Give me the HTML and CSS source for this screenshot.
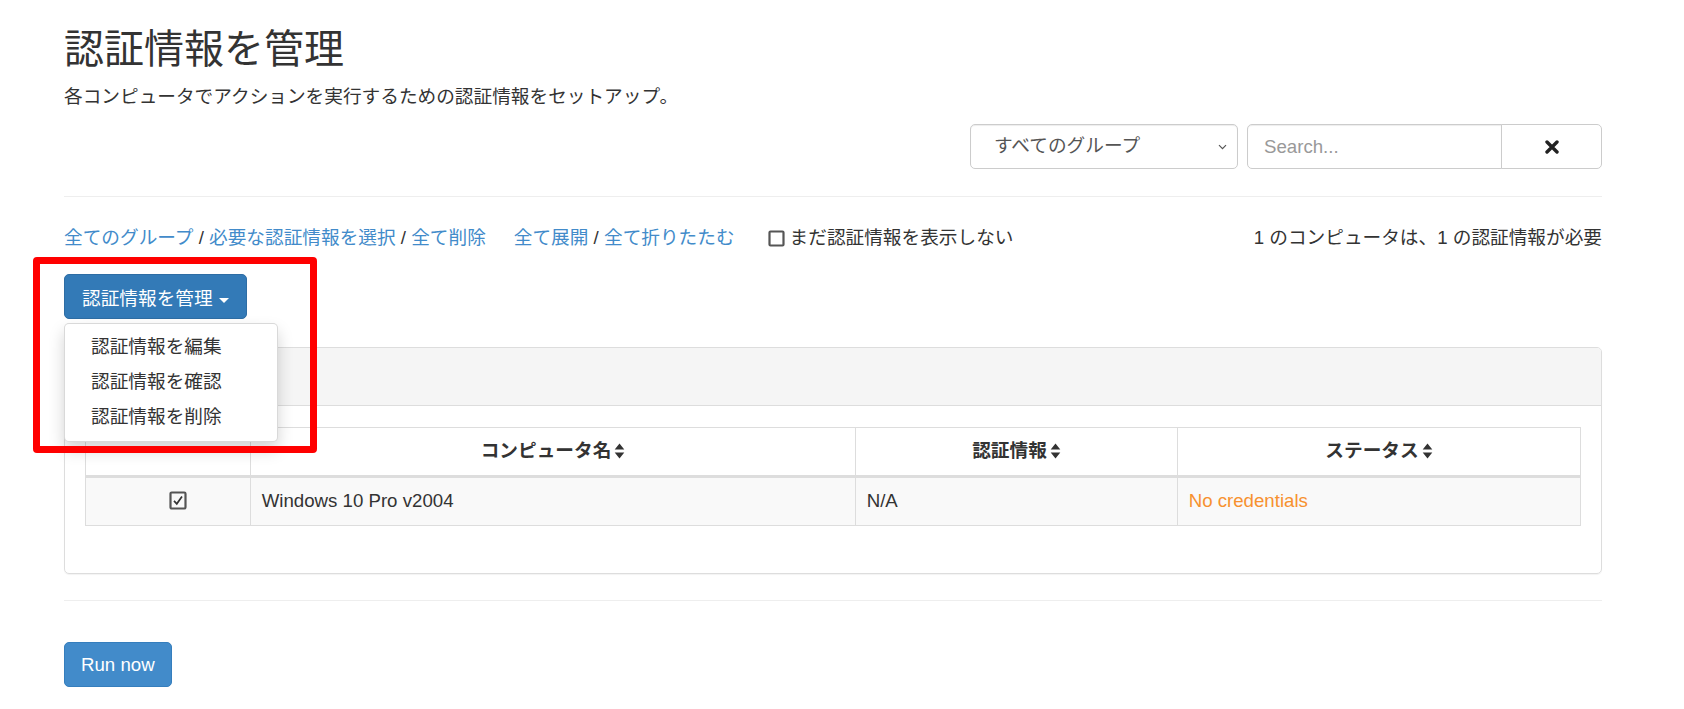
FILE: index.html
```html
<!DOCTYPE html>
<html lang="ja">
<head>
  <meta charset="UTF-8">
  <meta name="viewport" content="width=device-width, initial-scale=1.0">
  <title>認証情報を管理</title>
  <link rel="stylesheet" href="styles.css">
</head>
<body>
  <div class="container">
    <h2 class="page-title">認証情報を管理</h2>
    <p class="page-desc">各コンピュータでアクションを実行するための認証情報をセットアップ。</p>

    <div class="filter-row">
      <div class="select-box">
        <span>すべてのグループ</span>
        <svg class="chevron" width="9" height="6" viewBox="0 0 9 6"><path d="M1 1.2 L4.5 4.7 L8 1.2" fill="none" stroke="#555" stroke-width="1.2"/></svg>
      </div>
      <div class="search-group">
        <input class="search-input" type="text" placeholder="Search...">
        <button class="clear-btn" type="button">
          <svg width="14" height="14" viewBox="0 0 14 14"><path d="M2 2 L12 12 M12 2 L2 12" stroke="#222" stroke-width="3.4" stroke-linecap="round"/></svg>
        </button>
      </div>
    </div>

    <hr>

    <div class="toolbar">
      <div class="toolbar-left">
        <span class="link-group"><a href="#">全てのグループ</a> / <a href="#">必要な認証情報を選択</a> / <a href="#">全て削除</a></span>
        <span class="link-group"><a href="#">全て展開</a> / <a href="#">全て折りたたむ</a></span>
        <label class="hide-check">
          <svg width="17" height="17" viewBox="0 0 17 17"><rect x="1.5" y="1.5" width="14" height="14" rx="1" fill="none" stroke="#555" stroke-width="2.2"/></svg>
          まだ認証情報を表示しない
        </label>
      </div>
      <div class="toolbar-right">1 のコンピュータは、1 の認証情報が必要</div>
    </div>

    <div class="actions">
      <button class="btn btn-manage" type="button">認証情報を管理 <span class="caret"></span></button>
      <ul class="dropdown-menu">
        <li><a href="#">認証情報を編集</a></li>
        <li><a href="#">認証情報を確認</a></li>
        <li><a href="#">認証情報を削除</a></li>
      </ul>
      <div class="highlight"></div>
    </div>

    <div class="panel">
      <div class="panel-heading"></div>
      <div class="panel-body">
        <table class="cred-table">
          <thead>
            <tr>
              <th class="col-check"></th>
              <th class="col-name">コンピュータ名<svg class="sort" width="11" height="18" viewBox="0 0 11 18"><path d="M5.5 1.5 L10.3 7.6 H0.7 Z M0.7 10.4 H10.3 L5.5 16.5 Z" fill="#333"/></svg></th>
              <th class="col-cred">認証情報<svg class="sort" width="11" height="18" viewBox="0 0 11 18"><path d="M5.5 1.5 L10.3 7.6 H0.7 Z M0.7 10.4 H10.3 L5.5 16.5 Z" fill="#333"/></svg></th>
              <th class="col-status">ステータス<svg class="sort" width="11" height="18" viewBox="0 0 11 18"><path d="M5.5 1.5 L10.3 7.6 H0.7 Z M0.7 10.4 H10.3 L5.5 16.5 Z" fill="#333"/></svg></th>
            </tr>
          </thead>
          <tbody>
            <tr>
              <td class="cell-check">
                <svg width="18" height="19" viewBox="0 0 18 19"><rect x="1.5" y="1.5" width="15" height="16" rx="1.2" fill="none" stroke="#555" stroke-width="2.2"/><path d="M5 9.8 L7.8 12.8 L13 5.5" fill="none" stroke="#333" stroke-width="1.7"/></svg>
              </td>
              <td>Windows 10 Pro v2004</td>
              <td>N/A</td>
              <td class="status-warn">No credentials</td>
            </tr>
          </tbody>
        </table>
      </div>
    </div>

    <hr>

    <button class="btn btn-run" type="button">Run now</button>
  </div>
</body>
</html>
```

FILE: styles.css
```css
* { box-sizing: border-box; }
html, body { margin: 0; padding: 0; }
body {
  font-family: "Liberation Sans", "Noto Sans CJK JP", sans-serif;
  font-size: 18.67px;
  line-height: 26.67px;
  color: #333;
  background: #fff;
}
a { color: #428bca; text-decoration: none; }

.container { margin-left: 64px; width: 1538px; }

.page-title {
  margin: 26.67px 0 13.33px;
  font-size: 40px;
  line-height: 44px;
  font-weight: 400;
}
.page-desc { margin: 0 0 13.33px; }

.filter-row { display: flex; justify-content: flex-end; gap: 9px; margin-top: 2px; }
.select-box {
  width: 268px; height: 45.3px;
  display: flex; align-items: center; justify-content: space-between;
  padding: 0 10px 0 23px;
  border: 1px solid #ccc; border-radius: 5px;
  color: #555;
  box-shadow: inset 0 1px 1px rgba(0, 0, 0, 0.075);
}
.search-group { display: flex; width: 355px; }
.search-input {
  width: 255px; height: 45.3px;
  padding: 0 16px;
  border: 1px solid #ccc; border-radius: 5px 0 0 5px;
  font-family: inherit; font-size: 18.67px; color: #555;
  box-shadow: inset 0 1px 1px rgba(0, 0, 0, 0.075);
  outline: none;
}
.search-input::placeholder { color: #999; }
.clear-btn {
  flex: 1; height: 45.3px;
  margin-left: -1px;
  display: flex; align-items: center; justify-content: center;
  background: #fff;
  border: 1px solid #ccc; border-radius: 0 5px 5px 0;
}

hr { margin: 26.67px 0; border: 0; border-top: 1px solid #eee; }

.toolbar { display: flex; justify-content: space-between; align-items: center; padding-top: 1.5px; }
.toolbar-left { display: flex; align-items: center; gap: 28px; }
.hide-check { display: flex; align-items: center; gap: 5px; margin-left: 5px; }
.hide-check svg { display: block; }

.actions { position: relative; width: fit-content; margin-top: 22.5px; }
.btn {
  height: 44.5px;
  padding: 0 16px;
  border: 1px solid transparent; border-radius: 5px;
  font-family: inherit; font-size: 18.67px;
  color: #fff;
  cursor: pointer;
}
.btn-manage { background: #337ab7; border-color: #2e6da4; padding: 0 17px; }
.caret {
  display: inline-block;
  width: 0; height: 0;
  margin-left: 1px;
  vertical-align: middle;
  border-top: 5px solid #fff;
  border-left: 5px solid transparent;
  border-right: 5px solid transparent;
}
.dropdown-menu {
  position: absolute; top: calc(100% + 4px); left: 0;
  z-index: 10;
  min-width: 214px;
  margin: 0; padding: 6.67px 0;
  list-style: none;
  background: #fff;
  border: 1px solid rgba(0, 0, 0, 0.15); border-radius: 5px;
  box-shadow: 0 8px 16px rgba(0, 0, 0, 0.175);
}
.dropdown-menu a { display: block; padding: 4px 26px; color: #333; white-space: nowrap; }
.highlight {
  position: absolute; left: -31px; top: -17px;
  z-index: 11;
  width: 284px; height: 196px;
  border: 7px solid #ff0000; border-radius: 4px;
  pointer-events: none;
}

.panel {
  margin-top: 28px;
  border: 1px solid #ddd; border-radius: 5px;
  box-shadow: 0 1px 1px rgba(0, 0, 0, 0.05);
}
.panel-heading {
  height: 58px;
  background: #f5f5f5;
  border-bottom: 1px solid #ddd;
  border-radius: 4px 4px 0 0;
}
.panel-body { padding: 21px 20px 20px; }

.cred-table { width: 100%; border-collapse: collapse; margin-bottom: 27px; }
.cred-table th, .cred-table td { border: 1px solid #ddd; padding: 10px 10.67px; }
.cred-table th { text-align: center; font-weight: 700; border-bottom: 3px solid #ddd; padding-top: 10.5px; padding-bottom: 10px; }
.cred-table tbody tr { background: #f9f9f9; }
.col-check { width: 165px; }
.col-name { width: 605px; }
.col-cred { width: 322px; }
.sort { margin-left: 3px; vertical-align: -3px; }
.cell-check { text-align: center; padding-left: 30px !important; }
.cell-check svg { display: inline-block; vertical-align: -3px; }
.status-warn { color: #f7912f; }

.btn-run { margin-top: 14.5px; background: #428bca; border-color: #357ebd; }
```
